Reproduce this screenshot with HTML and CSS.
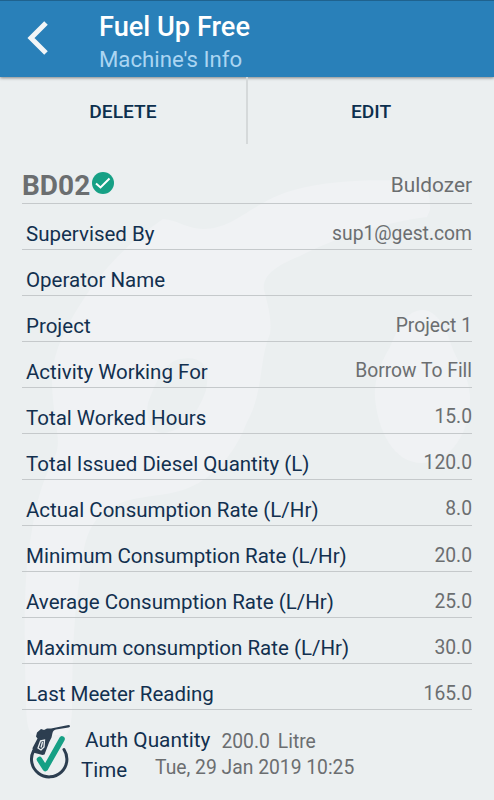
FILE: index.html
```
<!DOCTYPE html>
<html lang="en">

<head>
  <meta charset="UTF-8">
  <meta name="viewport" content="width=device-width, initial-scale=1.0">
  <title>Fuel Up Free</title>
  <link rel="stylesheet" href="styles.css">
</head>

<body>

  <!-- Background watermark -->
  <svg class="watermark" viewBox="0 0 494 800" aria-hidden="true">
    <path fill-rule="evenodd" d="M163 219C178 220 187 229 203 229C236 229 251 202 294 190C328 180 372 179 422 181Q431 194 430 210L427 217C387 222 337 237 300 256C275 266 262 276 264 290C268 305 272 320 270 334C259 358 264 392 247 422C234 456 212 480 183 490C158 498 133 494 109 509C80 526 83 562 76 606Q72 650 72 710Q71 735 64 735H34Q26 735 26 700C24 640 24 590 28 555C36 500 41 485 55 456C63 439 52 420 52 378C53 350 68 322 89 291C111 260 135 238 163 219ZM180 359C164 362 155 384 148 403C145 422 151 432 163 433C184 431 198 414 206 390C211 366 202 355 180 359Z" />
    <path d="M423 310C405 310 397 331 390 347C378 367 374 383 375 398C378 432 394 463 422 463C452 463 471 430 470 396C469 375 457 361 452 347C446 328 438 311 423 310Z" />
  </svg>

  <header class="app-bar">
    <svg class="back-icon" viewBox="0 0 22 34">
      <path d="M19 2L4 17L19 32" />
    </svg>
    <div class="app-title">
      <h1>Fuel Up Free</h1>
      <p>Machine's Info</p>
    </div>
  </header>

  <div class="actions">
    <button class="action-btn">DELETE</button>
    <button class="action-btn">EDIT</button>
  </div>

  <main class="info">
    <div class="row machine">
      <h2>BD02</h2>
      <svg class="check-icon" viewBox="0 0 22 22">
        <circle cx="11" cy="11" r="11" />
        <path d="M4 11.500L8.500 15.500L17.500 6.500" />
      </svg>
      <span class="value">Buldozer</span>
    </div>
    <div class="row"><span class="label">Supervised By</span><span class="value">sup1@gest.com</span></div>
    <div class="row"><span class="label">Operator Name</span></div>
    <div class="row"><span class="label">Project</span><span class="value">Project 1</span></div>
    <div class="row"><span class="label">Activity Working For</span><span class="value raised">Borrow To Fill</span></div>
    <div class="row"><span class="label">Total Worked Hours</span><span class="value raised">15.0</span></div>
    <div class="row"><span class="label">Total Issued Diesel Quantity (L)</span><span class="value raised">120.0</span></div>
    <div class="row"><span class="label">Actual Consumption Rate (L/Hr)</span><span class="value raised">8.0</span></div>
    <div class="row"><span class="label">Minimum Consumption Rate (L/Hr)</span><span class="value">20.0</span></div>
    <div class="row"><span class="label">Average Consumption Rate (L/Hr)</span><span class="value">25.0</span></div>
    <div class="row"><span class="label">Maximum consumption Rate (L/Hr)</span><span class="value">30.0</span></div>
    <div class="row"><span class="label">Last Meeter Reading</span><span class="value">165.0</span></div>
  </main>

  <footer class="auth">
    <svg class="auth-icon" viewBox="0 0 42 56">
      <path class="ring" d="M4.500 27A17.700 17.700 0 1 0 35 25.500" />
      <path class="nozzle" d="M4 28.500L3.500 24L8.500 14.500L7 12.500L8 8.500L12 5L15 6L18 4.500H22L39.500 1Q41 1 41 2.300Q41 3.300 39.500 3.500L27 5.500Q24 6 23.500 9L22.500 13.500L20 18.500L15.500 30.500L13.500 31Z" />
      <path class="handle" d="M11.500 17L15.500 16L15 23L12 26L9 24Z" />
      <path class="handle" d="M13.500 18L12 23.500" />
      <path class="tick" d="M10.500 35.500L16.300 44.500L33 15" />
    </svg>
    <div class="auth-lines">
      <div class="auth-line quantity"><span class="label">Auth Quantity</span><span class="value">200.0</span><span class="value">Litre</span></div>
      <div class="auth-line time"><span class="label">Time</span><span class="value">Tue, 29 Jan 2019 10:25</span></div>
    </div>
  </footer>

</body>

</html>
```
FILE: styles.css
```
* {
  margin: 0;
  padding: 0;
  box-sizing: border-box;
  font-family: Roboto, "Liberation Sans", sans-serif;
}

body {
  position: relative;
  height: 800px;
  overflow: hidden;
  background-color: #ebeff0;
}

/* Sits behind everything else on the page */
.watermark {
  position: absolute;
  z-index: -1;
  top: 0;
  left: 0;
  width: 494px;
  height: 800px;
  fill: #f0f2f4;
}

/* App bar */
.app-bar {
  display: flex;
  height: 77px;
  padding-left: 27px;
  background-color: #2980b9;
  border-top: 1px solid #1f628e;
  box-shadow: 0 1px 3px rgba(0, 0, 0, 0.45);
}

.back-icon {
  width: 22px;
  height: 34px;
  margin-top: 20px;
  fill: none;
  stroke: #f2f5f7;
  stroke-width: 5;
}

.app-title {
  margin-left: 50px;
  padding-top: 9px;
}

.app-title h1 {
  font-size: 27.2px;
  line-height: 34px;
  font-weight: 500;
  color: #fff;
}

.app-title p {
  font-size: 22.2px;
  line-height: 30px;
  color: #abd5f2;
}

/* Delete / Edit */
.actions {
  display: flex;
  height: 67px;
}

.action-btn {
  flex: 1;
  padding-top: 1px;
  border: none;
  background: none;
  font-size: 19.2px;
  font-weight: 500;
  color: #0c2f4e;
  cursor: pointer;
}

.action-btn:first-child {
  border-right: 2px solid #d5d9da;
}

/* Machine details */
.info {
  margin: 13px 22px 0;
}

.row {
  display: flex;
  align-items: center;
  height: 46px;
  padding: 15px 0 0 4px;
  border-bottom: 1px solid #c5c9cb;
}

.label {
  font-size: 20.5px;
  line-height: 28px;
  color: #12304f;
  white-space: nowrap;
}

.value {
  margin-left: auto;
  font-size: 19.3px;
  line-height: 28px;
  color: #6b6e70;
  white-space: nowrap;
}

.raised {
  padding-bottom: 2px;
}

.machine {
  height: 47px;
  padding: 9px 0 0;
}

.machine h2 {
  font-size: 28px;
  line-height: 36px;
  font-weight: 700;
  color: #6b6e70;
  padding-top: 2px;
}

.machine .value {
  font-size: 20.8px;
}

.check-icon {
  width: 22px;
  height: 22px;
  margin: -3px 0 0 2px;
  fill: #16a085;
}

.check-icon path {
  fill: none;
  stroke: #fff;
  stroke-width: 2;
}

/* Last authorization */
.auth {
  display: flex;
  padding: 14px 0 0 29px;
}

.auth-icon {
  width: 42px;
  height: 56px;
}

.ring {
  fill: none;
  stroke: #2c3e50;
  stroke-width: 3;
  stroke-linecap: round;
}

.nozzle {
  fill: #2c3e50;
}

.handle {
  fill: none;
  stroke: #ebeff0;
  stroke-width: 1.3;
}

.tick {
  fill: none;
  stroke: #16a085;
  stroke-width: 5.6;
  stroke-linecap: round;
  stroke-linejoin: round;
}

.auth-line {
  display: flex;
  height: 28px;
}

.quantity {
  margin-left: 14px;
  padding-top: 2px;
}

.quantity .label {
  font-size: 20.8px;
}

.quantity .value {
  margin-left: 11px;
  padding-top: 2px;
}

.quantity .value:last-child {
  margin-left: 8px;
}

.time {
  margin-left: 10px;
}

.time .label {
  padding-top: 4px;
}

.time .value {
  margin-left: 28px;
  padding-top: 2px;
}
```
